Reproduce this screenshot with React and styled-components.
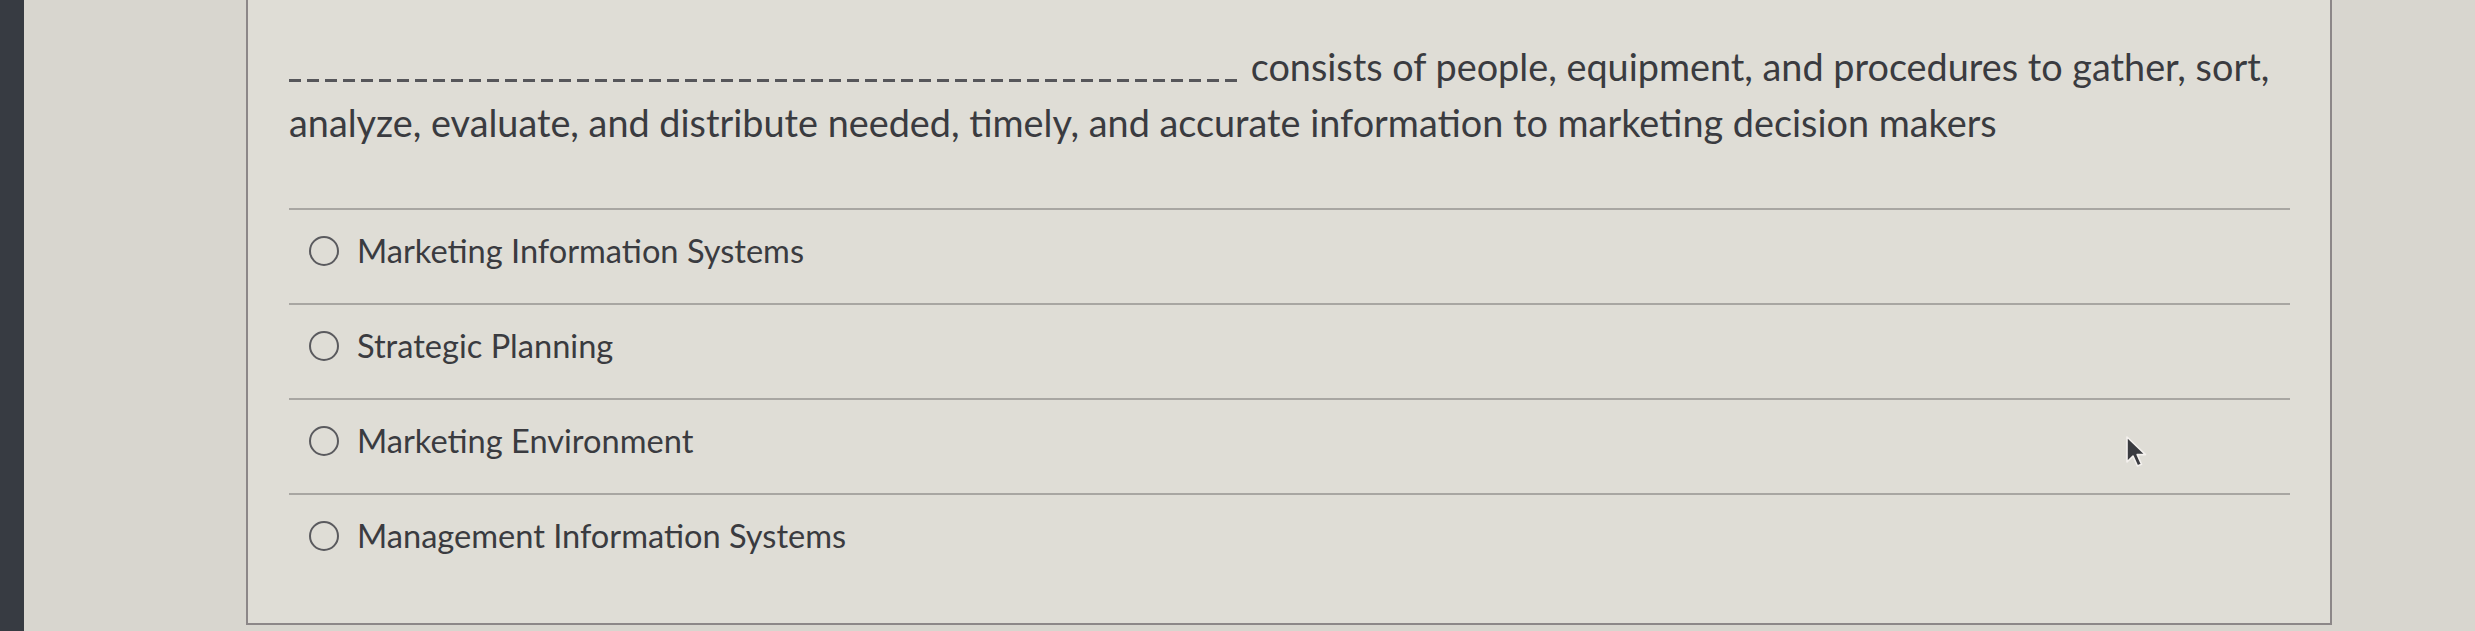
import React from "react";
import styled, { createGlobalStyle } from "styled-components";

const GlobalStyle = createGlobalStyle`
  html, body {
    margin: 0;
    padding: 0;
    background: #d8d6cf;
    font-family: Lato, "Open Sans", "Liberation Sans", sans-serif;
  }
  * { box-sizing: border-box; }
`;

const Screen = styled.div`
  position: relative;
  display: flex;
  height: 631px;
  overflow: hidden;
  background: #d8d6cf;
`;

const Bezel = styled.div`
  flex: 0 0 24px;
  background: #373b42;
`;

const Card = styled.section`
  flex: 0 0 2086px;
  height: 625px;
  margin-left: 222px;
  background: #dfddd6;
  border: 2px solid #8c8788;
  border-top: none;
  padding: 39px 40px 0 41px;
  color: #3a3b40;
`;

const Question = styled.p`
  margin: 0;
  font-size: 37.8px;
  line-height: 56px;
  font-weight: 400;
  white-space: nowrap;
`;

const Blank = styled.span`
  display: inline-block;
  width: 950px;
  height: 3px;
  margin-right: 2px;
  vertical-align: -1px;
  background: repeating-linear-gradient(
    90deg,
    #56565a 0 12px,
    transparent 12px 18px
  );
`;

const Options = styled.ul`
  list-style: none;
  margin: 57px 0 0;
  padding: 0;
`;

const Option = styled.li`
  display: flex;
  align-items: center;
  height: 95px;
  padding: 0 0 11px 20px;
  border-top: 2px solid #a8a6a2;
  font-size: 32.6px;
  line-height: 40px;
`;

const Radio = styled.span`
  flex: 0 0 auto;
  width: 30px;
  height: 30px;
  border: 2px solid #5a5a5e;
  border-radius: 50%;
  margin-right: 18px;
`;

const Cursor = styled.svg`
  position: absolute;
  left: 2125px;
  top: 435px;
  width: 26px;
  height: 38px;
`;

const answers = [
  "Marketing Information Systems",
  "Strategic Planning",
  "Marketing Environment",
  "Management Information Systems",
];

export default function App() {
  return (
    <>
      <GlobalStyle />
      <Screen>
        <Bezel />
        <Card>
          <Question>
            <Blank /> consists of people, equipment, and procedures to gather,
            sort,
            <br />
            analyze, evaluate, and distribute needed, timely, and accurate
            information to marketing decision makers
          </Question>
          <Options>
            {answers.map((a) => (
              <Option key={a}>
                <Radio />
                {a}
              </Option>
            ))}
          </Options>
        </Card>
        <Cursor viewBox="0 0 26 38">
          <path
            d="M2 2 L2 27 L8 21 L12.5 31 L16.5 29.3 L12.2 19.6 L20.5 19.6 Z"
            fill="#3a3b40"
            stroke="#f4f1ee"
            strokeWidth="1.6"
            strokeLinejoin="round"
          />
        </Cursor>
      </Screen>
    </>
  );
}
